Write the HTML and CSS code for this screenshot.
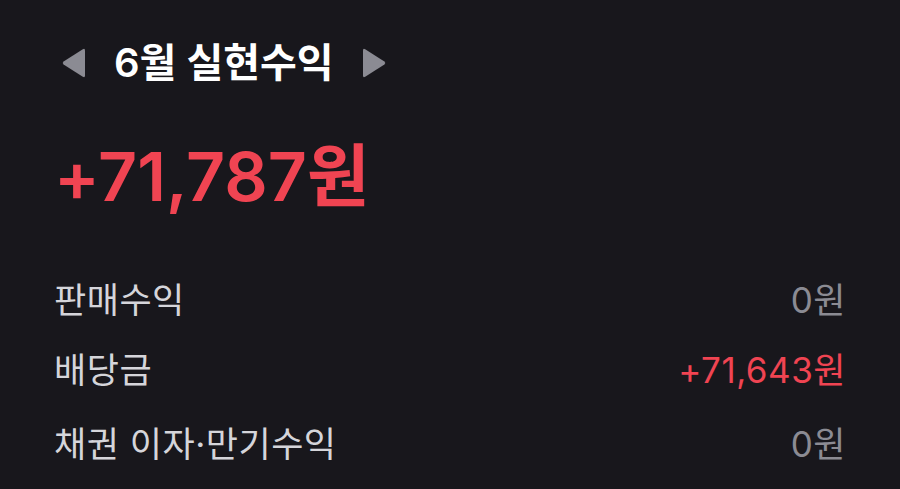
FILE: index.html
```html
<!DOCTYPE html>
<html lang="ko">
<head>
<meta charset="utf-8">
<link rel="stylesheet" href="styles.css">
</head>
<body>
<div class="page">
  <div class="month-nav">
    <svg class="arrow" width="26" height="32" viewBox="0 0 26 32"><path d="M24 3.5 L24 28.5 Q24 31 21.8 29.7 L2.6 17.6 Q0.8 16 2.6 14.4 L21.8 2.3 Q24 1 24 3.5 Z" fill="#8b8b93"/></svg>
    <div class="title">6월 실현수익</div>
    <svg class="arrow" width="26" height="32" viewBox="0 0 26 32"><path d="M2 3.5 L2 28.5 Q2 31 4.2 29.7 L23.4 17.6 Q25.2 16 23.4 14.4 L4.2 2.3 Q2 1 2 3.5 Z" fill="#8b8b93"/></svg>
  </div>
  <div class="total">+71,787원</div>
  <div class="rows">
    <div class="row"><span class="label">판매수익</span><span class="value">0원</span></div>
    <div class="row"><span class="label">배당금</span><span class="value red">+71,643원</span></div>
    <div class="row"><span class="label">채권 이자·만기수익</span><span class="value">0원</span></div>
  </div>
</div>
</body>
</html>
```

FILE: styles.css
```css
html, body {
  margin: 0;
  padding: 0;
  background: #18171c;
}
body {
  font-family: Inter, "Noto Sans CJK KR", "Noto Sans", sans-serif;
  width: 900px;
  height: 489px;
  overflow: hidden;
}
.page {
  padding: 0 54px 0 54px;
}
.month-nav {
  display: flex;
  align-items: center;
  height: 64px;
  margin-top: 31px;
  margin-left: 7px;
  gap: 27px;
}
.title {
  color: #ffffff;
  font-size: 40px;
  font-weight: 600;
  line-height: 64px;
}
.total {
  color: #f04452;
  font-size: 68px;
  font-weight: 600;
  margin-top: 36px;
  line-height: 90px;
}
.rows {
  margin-top: 40px;
}
.row {
  display: flex;
  justify-content: space-between;
  align-items: center;
  height: 72px;
  font-size: 35px;
}
.row:nth-child(2) {
  margin-top: -2px;
  margin-bottom: 2px;
}
.label {
  color: #d5d5da;
  letter-spacing: 0.5px;
}
.value {
  color: #8b8b93;
  letter-spacing: 0.5px;
}
.value.red {
  color: #f04452;
}
```
